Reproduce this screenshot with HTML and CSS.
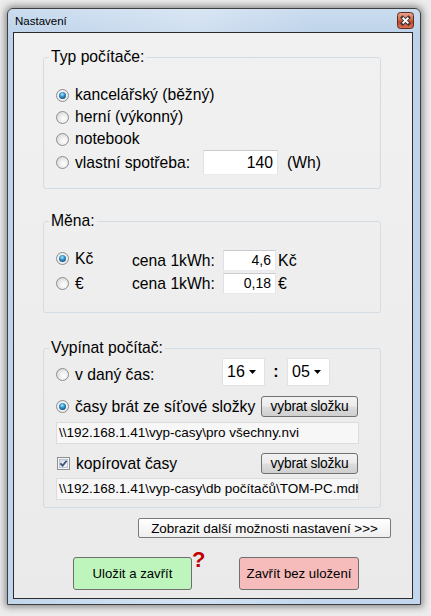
FILE: index.html
```html
<!DOCTYPE html>
<html lang="cs">
<head>
<meta charset="utf-8">
<title>Nastavení</title>
<link rel="stylesheet" href="styles.css">
</head>
<body>
<div class="desk">
  <div class="window">
    <div class="titlebar">
      <span class="title">Nastavení</span>
      <span class="close">
        <svg width="17" height="17" viewBox="0 0 17 17">
          <defs>
            <linearGradient id="cg" x1="0" y1="0" x2="0" y2="1">
              <stop offset="0" stop-color="#eaa48e"/>
              <stop offset="0.45" stop-color="#d66c52"/>
              <stop offset="0.55" stop-color="#c2452b"/>
              <stop offset="1" stop-color="#dc7452"/>
            </linearGradient>
          </defs>
          <rect x="0.5" y="0.5" width="16" height="16" rx="3" fill="url(#cg)" stroke="#5b2c22"/>
          <path d="M5.6 5.8l5.8 5.6M11.4 5.8l-5.8 5.6" stroke="#3c3434" stroke-width="3.6" stroke-linecap="square"/>
          <path d="M5.6 5.8l5.8 5.6M11.4 5.8l-5.8 5.6" stroke="#ffffff" stroke-width="1.9"/>
        </svg>
      </span>
    </div>
    <div class="client">
      <fieldset class="group g1">
        <legend>Typ počítače:</legend>
        <div class="opts">
          <div class="opt"><span class="radio on"><span class="dot"></span></span><span>kancelářský (běžný)</span></div>
          <div class="opt"><span class="radio"></span><span>herní (výkonný)</span></div>
          <div class="opt"><span class="radio"></span><span>notebook</span></div>
          <div class="opt tall"><span class="radio"></span><span class="lbl-own">vlastní spotřeba:</span><span class="tb tb-own">140</span><span class="unit-wh">(Wh)</span></div>
        </div>
      </fieldset>

      <fieldset class="group g2">
        <legend>Měna:</legend>
        <div class="cur">
          <div class="cur-opt top"><span class="radio on"><span class="dot"></span></span><span>Kč</span></div>
          <span class="price-lbl">cena 1kWh:</span>
          <span class="tb tb-price">4,6</span>
          <span class="cur-unit">Kč</span>

          <div class="cur-opt"><span class="radio"></span><span>€</span></div>
          <span class="price-lbl">cena 1kWh:</span>
          <span class="tb tb-price">0,18</span>
          <span class="cur-unit">€</span>
        </div>
      </fieldset>

      <fieldset class="group g3">
        <legend>Vypínat počítač:</legend>
        <div class="off">
          <div class="row-time">
            <div class="time-opt"><span class="radio"></span><span class="lbl-time">v daný čas:</span></div>
            <span class="combo"><span>16</span><svg class="arrow" width="7" height="4" viewBox="0 0 7 4"><polygon points="0,0 7,0 3.5,4" fill="#000"/></svg></span>
            <span class="colon">:</span>
            <span class="combo"><span>05</span><svg class="arrow" width="7" height="4" viewBox="0 0 7 4"><polygon points="0,0 7,0 3.5,4" fill="#000"/></svg></span>
          </div>
          <div class="row-net">
            <span class="radio on"><span class="dot"></span></span><span class="lbl-net">časy brát ze síťové složky</span>
            <span class="btn btn-pick">vybrat složku</span>
          </div>
          <div class="path path1">\\192.168.1.41\vyp-casy\pro všechny.nvi</div>
          <div class="row-copy">
            <span class="check">
              <svg width="13" height="13" viewBox="0 0 13 13">
                <defs>
                  <linearGradient id="kg" x1="0" y1="0" x2="1" y2="1">
                    <stop offset="0" stop-color="#cfd8e6"/>
                    <stop offset="1" stop-color="#f4f6fa"/>
                  </linearGradient>
                </defs>
                <rect x="0.5" y="0.5" width="12" height="12" fill="#f6f6f6" stroke="#8e8f8f"/>
                <rect x="2.5" y="2.5" width="8" height="8" fill="url(#kg)" stroke="#b9c3d3"/>
                <path d="M3.4 6.4l2.2 2.3 4-5" fill="none" stroke="#3a4c72" stroke-width="1.7"/>
              </svg>
            </span>
            <span class="lbl-copy">kopírovat časy</span>
            <span class="btn btn-pick">vybrat složku</span>
          </div>
          <div class="path path2">\\192.168.1.41\vyp-casy\db počítačů\TOM-PC.mdb</div>
        </div>
      </fieldset>

      <span class="btn btn-more">Zobrazit další možnosti nastavení &gt;&gt;&gt;</span>

      <div class="actions">
        <span class="btn btn-save">Uložit a zavřít</span>
        <span class="qmark">?</span>
        <span class="btn btn-cancel">Zavřít bez uložení</span>
      </div>
    </div>
  </div>
</div>
</body>
</html>
```

FILE: styles.css
```css
html, body {
  margin: 0;
  padding: 0;
}

body {
  background: #ececec;
  font-family: "Liberation Sans", Arial, sans-serif;
  color: #000;
}

.desk {
  box-sizing: border-box;
  height: 616px;
  padding: 8px 0 0 7px;
  overflow: hidden;
}

.window {
  box-sizing: border-box;
  width: 414px;
  height: 597px;
  border: 1px solid #3e3e3e;
  border-radius: 6px 6px 0 0;
  background:
    linear-gradient(90deg, rgba(255,255,255,0) 0%, rgba(255,255,255,0.28) 45%, rgba(255,255,255,0) 75%),
    linear-gradient(180deg, #cadcef 0px, #bed3ea 24px, #c2d7ed 100%);
  box-shadow: 0 0 7px 2px rgba(0, 0, 0, 0.42);
  display: flex;
  flex-direction: column;
}

.titlebar {
  height: 23px;
  flex: none;
  display: flex;
  justify-content: space-between;
  align-items: flex-start;
  padding: 0 6px 0 7px;
}

.title {
  font-size: 11.5px;
  line-height: 24px;
  color: #000;
}

.close {
  margin-top: 3px;
  width: 17px;
  height: 17px;
  display: block;
}

.close svg {
  display: block;
}

.client {
  box-sizing: border-box;
  margin-left: 5px;
  width: 400px;
  height: 567px;
  border: 1px solid #2c2c2c;
  background: linear-gradient(180deg, #f1f1f1 0%, #ededed 60%, #eaeaea 100%);
  display: flex;
  flex-direction: column;
  align-items: flex-start;
}

/* group boxes */
.group {
  box-sizing: border-box;
  width: 338px;
  min-width: 0;
  margin: 0 0 0 29px;
  padding: 0 0 0 5px;
  border: 1px solid #d3dce3;
  border-radius: 3px;
}

.group legend {
  padding: 0 2px;
  font-size: 15.7px;
  line-height: 20px;
}

.g1 {
  margin-top: 14px;
  padding-top: 17px;
  padding-bottom: 13px;
}

.g2 {
  margin-top: 22px;
  padding-top: 19px;
  padding-bottom: 18px;
}

.g3 {
  margin-top: 25px;
  padding-top: 0;
  padding-bottom: 7px;
}

/* radio buttons */
.radio {
  box-sizing: border-box;
  flex: none;
  width: 13px;
  height: 13px;
  margin-right: 6px;
  border: 1px solid #8c8d8d;
  border-radius: 50%;
  background: radial-gradient(circle at 62% 62%, #ffffff 0%, #ececec 45%, #cdcdcd 100%);
  display: flex;
  align-items: center;
  justify-content: center;
}

.radio.on {
  background: radial-gradient(circle at 50% 50%, #ffffff 0%, #f0f0f0 60%, #d6d6d6 100%);
}

.radio .dot {
  width: 7px;
  height: 7px;
  border-radius: 50%;
  background: radial-gradient(circle at 45% 35%, #b6ecff 0%, #3d9bd1 35%, #175a8c 70%, #0e3a5e 100%);
}

/* group 1 */
.opts {
  padding-left: 7px;
  display: flex;
  flex-direction: column;
}

.opt {
  height: 22px;
  display: flex;
  align-items: center;
  font-size: 15.7px;
  white-space: nowrap;
}

.opt.tall {
  height: 25px;
}

.lbl-own {
  width: 128px;
  flex: none;
}

.tb {
  box-sizing: border-box;
  background: #fff;
  border: 1px solid;
  border-color: #c9cbd0 #e3e5ea #e8ebef #dfe1e6;
  text-align: right;
  white-space: nowrap;
}

.tb-own {
  width: 75px;
  height: 25px;
  line-height: 23px;
  padding-right: 4px;
  font-size: 15.7px;
}

.unit-wh {
  margin-left: 9px;
}

/* group 2 */
.cur {
  padding-left: 7px;
  display: grid;
  grid-template-columns: 76px 91px 53px auto;
  grid-template-rows: 21px 21px;
  row-gap: 2px;
  align-items: center;
  font-size: 15.7px;
}

.cur-opt {
  display: flex;
  align-items: center;
  height: 17px;
}

.cur-opt.top {
  align-self: start;
}

.price-lbl {
  white-space: nowrap;
}

.tb-price {
  height: 21px;
  line-height: 19px;
  padding-right: 4px;
  font-size: 14px;
}

.cur-unit {
  margin-left: 2px;
  font-size: 16px;
}

/* group 3 */
.off {
  padding-left: 7px;
  display: flex;
  flex-direction: column;
  font-size: 15.7px;
}

.row-time {
  height: 28px;
  display: flex;
  align-items: center;
}

.time-opt {
  display: flex;
  align-items: center;
  margin-top: 5px;
}

.lbl-time {
  width: 147px;
  flex: none;
}

.combo {
  box-sizing: border-box;
  width: 43px;
  height: 28px;
  background: #fff;
  border: 1px solid #e2e2e2;
  display: flex;
  align-items: center;
  padding-left: 4px;
  font-size: 16px;
}

.combo .arrow {
  margin-left: auto;
  margin-right: 8px;
  display: block;
}

.colon {
  width: 22px;
  text-align: center;
  font-weight: bold;
  font-size: 16px;
}

.row-net {
  margin-top: 10px;
  height: 21px;
  display: flex;
  align-items: center;
  white-space: nowrap;
}

.lbl-net {
  width: 186px;
  flex: none;
}

.btn {
  box-sizing: border-box;
  display: flex;
  align-items: center;
  justify-content: center;
  border: 1px solid #707070;
  border-radius: 3px;
  white-space: nowrap;
  color: #000;
}

.btn-pick {
  width: 97px;
  height: 21px;
  font-size: 13.8px;
  letter-spacing: -0.2px;
  background: linear-gradient(180deg, #f3f3f3 0%, #ebebeb 48%, #dddddd 52%, #cfcfcf 100%);
}

.path {
  box-sizing: border-box;
  width: 303px;
  height: 22px;
  padding-left: 2px;
  background: #f7f7f7;
  border: 1px solid #dcdcdc;
  font-size: 13.5px;
  line-height: 20px;
  white-space: nowrap;
  overflow: hidden;
}

.path1 {
  margin-top: 5px;
}

.row-copy {
  margin-top: 9px;
  height: 21px;
  display: flex;
  align-items: center;
  white-space: nowrap;
}

.check {
  width: 13px;
  height: 13px;
  margin-left: 1px;
  margin-right: 6px;
  flex: none;
}

.check svg {
  display: block;
}

.lbl-copy {
  width: 185px;
  flex: none;
}

.path2 {
  margin-top: 4px;
}

/* bottom buttons */
.btn-more {
  margin-top: 10px;
  margin-left: 124px;
  width: 253px;
  height: 20px;
  font-size: 13.4px;
  border-color: #7a7a7a;
  border-radius: 2px;
  background: linear-gradient(180deg, #ffffff 0%, #f7f7f7 50%, #eeeeee 100%);
}

.actions {
  margin-top: 19px;
  margin-left: 59px;
  display: flex;
  align-items: flex-start;
}

.btn-save,
.btn-cancel {
  height: 33px;
  font-size: 13.2px;
  border-color: #6f6f6f;
}

.btn-save {
  width: 119px;
  background: #bdf5bc;
}

.btn-cancel {
  width: 120px;
  margin-left: 35px;
  background: #f6bbbb;
}

.qmark {
  width: 12px;
  margin-top: -8px;
  font-size: 22px;
  line-height: 22px;
  font-weight: bold;
  color: #c00000;
  text-align: center;
}
```
